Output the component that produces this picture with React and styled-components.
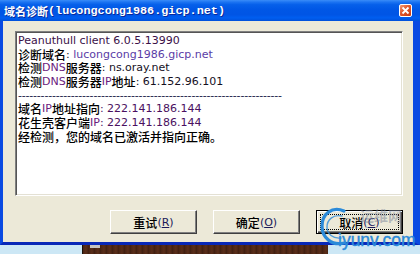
import React from 'react';
import styled, { createGlobalStyle } from 'styled-components';

const GlobalStyle = createGlobalStyle`
  html, body {
    margin: 0;
    padding: 0;
  }
  body {
    width: 420px;
    height: 254px;
    overflow: hidden;
    background: #cce7f5;
    font-family: "DejaVu Sans", "Noto Sans CJK SC", sans-serif;
  }
`;

const Screen = styled.div`
  position: relative;
  width: 420px;
  height: 254px;
  display: flex;
  flex-direction: column;
  overflow: hidden;
  background: #cce7f5;
`;

const Window = styled.div`
  display: flex;
  flex-direction: column;
  width: 420px;
  height: 245px;
`;

const TitleBar = styled.div`
  height: 21px;
  flex: none;
  display: flex;
  align-items: center;
  justify-content: space-between;
  padding: 0 8px 0 4px;
  background: linear-gradient(
    to bottom,
    #3a8cf8 0%,
    #1c74f2 10%,
    #0660ea 22%,
    #0057e6 45%,
    #0055e5 70%,
    #005ef0 85%,
    #0050da 100%
  );
`;

const Title = styled.div`
  display: flex;
  align-items: center;
  color: #fff;
  font-weight: bold;
  text-shadow: 1px 1px 0 #0a2a9a;
  white-space: pre;
`;

const TitleCjk = styled.span`
  font-family: "Noto Sans CJK SC", sans-serif;
  font-size: 11px;
`;

const TitleMono = styled.span`
  font-family: "Liberation Mono", monospace;
  font-size: 11.8px;
`;

const CloseButton = styled.div`
  width: 13px;
  height: 13px;
  box-sizing: border-box;
  border: 1px solid #fff;
  border-radius: 2px;
  background: linear-gradient(135deg, #f29a74 0%, #e0582c 45%, #c83a10 100%);
  display: flex;
  align-items: center;
  justify-content: center;
`;

const Body = styled.div`
  flex: 1;
  display: flex;
  flex-direction: column;
  background: #ece9d8;
  border-left: 3px solid #0a4ae2;
  border-right: 7px solid #0a4ae2;
  border-bottom: 3px solid #0828b8;
  padding: 10px 10px 8px 12px;
`;

const TextBox = styled.div`
  height: 165px;
  box-sizing: border-box;
  background: #fff;
  border: 1px solid;
  border-color: #808080 #ffffff #ffffff #808080;
  box-shadow: inset 1px 1px 0 #555, inset -1px -1px 0 #e4e1d4;
  padding: 2px 2px;
`;

const Line = styled.div`
  height: 13.7px;
  line-height: 13.7px;
  font-size: 12px;
  font-family: "Noto Sans CJK SC", sans-serif;
  font-weight: 500;
  color: #000;
  white-space: pre;
  display: flex;
  align-items: center;
`;

const Lat = styled.span`
  font-family: "DejaVu Sans", sans-serif;
  font-weight: normal;
  font-size: 11px;
  color: ${p => p.$c || '#14101e'};
`;

const Dashes = styled.span`
  font-family: "DejaVu Sans", sans-serif;
  font-weight: normal;
  font-size: 11px;
  color: #1a1a4a;
  letter-spacing: -0.2px;
`;

const Buttons = styled.div`
  margin-top: 14px;
  display: flex;
  justify-content: flex-end;
  gap: 16px;
`;

const Button = styled.div`
  position: relative;
  width: 87px;
  height: 24px;
  box-sizing: border-box;
  display: flex;
  align-items: center;
  justify-content: center;
  background: #ece9d8;
  font-family: "Noto Sans CJK SC", sans-serif;
  font-weight: 500;
  font-size: 12px;
  color: #000;
  border: 1px solid;
  border-color: ${p => (p.$default ? '#000 #000 #000 #000' : '#fff #404040 #404040 #fff')};
  box-shadow: ${p =>
    p.$default
      ? 'inset 1px 1px 0 #fff, inset -1px -1px 0 #404040, inset -2px -2px 0 #808080'
      : 'inset -1px -1px 0 #808080'};

  &::after {
    content: '';
    display: ${p => (p.$default ? 'block' : 'none')};
    position: absolute;
    inset: 3px;
    border: 1px dotted #000;
  }
`;

const Key = styled.span`
  font-family: "DejaVu Sans", sans-serif;
  font-weight: normal;
  font-size: 11px;
  color: #1a1a5a;
  u {
    text-underline-offset: 1px;
  }
`;

const Desktop = styled.div`
  flex: 1;
  display: flex;
  padding-left: 82px;
`;

const Wallpaper = styled.div`
  width: 238px;
  border-left: 1px solid #1a1008;
  background: repeating-linear-gradient(
    90deg,
    #4a2414 0px,
    #5a2e1a 3px,
    #3e1e10 6px
  );
  display: flex;
  padding-left: 7px;
`;

const Chip = styled.div`
  width: 10px;
  height: 3px;
  background: #c8c4c0;
`;

const Watermark = styled.div`
  position: absolute;
  left: 318px;
  top: 203px;
  width: 102px;
  height: 51px;
  pointer-events: none;
`;

const WmCn = styled.span`
  position: absolute;
  left: 42px;
  top: 2px;
  font-family: "Noto Sans CJK SC", sans-serif;
  font-weight: bold;
  font-size: 14px;
  line-height: 20px;
  color: rgba(120, 130, 150, 0.5);
`;

const WmEn = styled.span`
  position: absolute;
  left: 20px;
  top: 27px;
  font-family: "Liberation Sans", sans-serif;
  font-size: 17.5px;
  line-height: 20px;
  color: #2b8ad9;
  -webkit-text-stroke: 0.4px #2b8ad9;
`;

export default function App() {
  return (
    <Screen>
      <GlobalStyle />
      <Window>
        <TitleBar>
          <Title>
            <TitleCjk>域名诊断</TitleCjk>
            <TitleMono>(lucongcong1986.gicp.net)</TitleMono>
          </Title>
          <CloseButton>
            <svg width="9" height="9" viewBox="0 0 9 9">
              <path d="M1.5 1.5 L7.5 7.5 M7.5 1.5 L1.5 7.5" stroke="#fff" strokeWidth="1.8" />
            </svg>
          </CloseButton>
        </TitleBar>
        <Body>
          <TextBox>
            <Line>
              <Lat $c="#3a1048">Peanuthull client 6.0.5.13990</Lat>
            </Line>
            <Line>
              诊断域名<Lat>: </Lat>
              <Lat $c="#5a3ca6">lucongcong1986.gicp.net</Lat>
            </Line>
            <Line>
              检测<Lat $c="#6a1a7e">DNS</Lat>服务器<Lat>: ns.oray.net</Lat>
            </Line>
            <Line>
              检测<Lat $c="#6a1a7e">DNS</Lat>服务器<Lat $c="#6a1a7e">IP</Lat>地址
              <Lat>: 61.152.96.101</Lat>
            </Line>
            <Line>
              <Dashes>{'-'.repeat(70)}</Dashes>
            </Line>
            <Line>
              域名<Lat $c="#6a1a7e">IP</Lat>地址指向<Lat $c="#4a1060">: 222.141.186.144</Lat>
            </Line>
            <Line>
              花生壳客户端<Lat $c="#6a1a7e">IP</Lat>
              <Lat $c="#4a1060">: 222.141.186.144</Lat>
            </Line>
            <Line>经检测，您的域名已激活并指向正确。</Line>
          </TextBox>
          <Buttons>
            <Button>
              重试
              <Key>
                (<u>R</u>)
              </Key>
            </Button>
            <Button>
              确定
              <Key>
                (<u>O</u>)
              </Key>
            </Button>
            <Button $default>
              取消
              <Key>
                (<u>C</u>)
              </Key>
            </Button>
          </Buttons>
        </Body>
      </Window>
      <Desktop>
        <Wallpaper>
          <Chip />
        </Wallpaper>
      </Desktop>
      <Watermark>
        <svg width="40" height="44" viewBox="0 0 40 44" style={{ position: 'absolute', left: 0, top: 2 }}>
          <path
            d="M26 6 C14 1 4 9 4 21 C4 33 14 41 26 38"
            fill="none"
            stroke="#2b8ad9"
            strokeWidth="3.2"
            strokeLinecap="round"
          />
          <path
            d="M24 11 C15 9 9 15 9 22 C9 29 15 34 23 33"
            fill="none"
            stroke="#2b8ad9"
            strokeWidth="1.4"
            strokeLinecap="round"
            opacity="0.8"
          />
        </svg>
        <WmCn>运维网</WmCn>
        <WmEn>iyunv.com</WmEn>
      </Watermark>
    </Screen>
  );
}
